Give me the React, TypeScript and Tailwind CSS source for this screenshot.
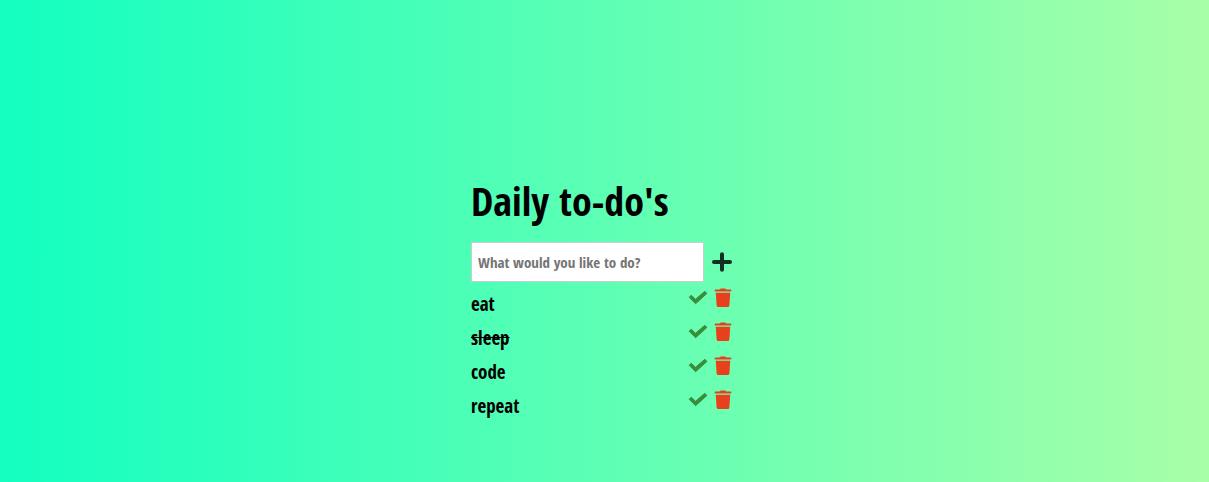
import { useState } from "react";
import type { FormEvent } from "react";

type Todo = { id: number; text: string; done: boolean };

const initialTodos: Todo[] = [
  { id: 1, text: "eat", done: false },
  { id: 2, text: "sleep", done: true },
  { id: 3, text: "code", done: false },
  { id: 4, text: "repeat", done: false },
];

function PlusIcon() {
  return (
    <svg className="size-5" viewBox="0 0 20 20" fill="none" stroke="currentColor" strokeWidth="4" strokeLinecap="round" aria-hidden="true">
      <path d="M10 2.2v15.6M2 10h16" />
    </svg>
  );
}

function CheckIcon() {
  return (
    <svg className="size-5" viewBox="0 0 20 20" fill="currentColor" stroke="currentColor" strokeWidth="1" strokeLinejoin="round" aria-hidden="true">
      <path d="M1.200 9.300L3.200 7.200 7.500 11.300 16.800 3.300 18.900 5.500 7.600 15.700z" />
    </svg>
  );
}

function TrashIcon() {
  return (
    <svg className="h-5 w-[18px]" viewBox="0 0 18 20" fill="currentColor" aria-hidden="true">
      <path d="M5.6 1.6C6 .9 6.5.6 7.2.6h3.6c.7 0 1.2.3 1.6 1h4.1c.5 0 .9.4.9.9s-.4.9-.9.9h-15c-.5 0-.9-.4-.9-.9s.4-.9.9-.9z" />
      <path d="M1.8 4.8h14.4l-.8 12.4c-.1 1.2-.9 1.9-2 1.9H4.600c-1.100 0-1.900-.7-2-1.900z" />
    </svg>
  );
}

export default function App() {
  const [todos, setTodos] = useState(initialTodos);
  const [draft, setDraft] = useState("");

  const add = (event: FormEvent) => {
    event.preventDefault();
    const text = draft.trim();
    if (!text) return;
    setTodos([...todos, { id: Date.now(), text, done: false }]);
    setDraft("");
  };

  const toggle = (id: number) =>
    setTodos(todos.map((t) => (t.id === id ? { ...t, done: !t.done } : t)));

  const remove = (id: number) => setTodos(todos.filter((t) => t.id !== id));

  return (
    <main className="flex min-h-screen justify-center bg-linear-to-r/srgb from-[#12ffc0] to-[#a8ffa8] pt-44 pb-12 font-['Open_Sans_Condensed','Open_Sans',sans-serif] font-bold text-black">
      <div className="pr-1.5">
        <h1 className="text-[40px] leading-[50px]">Daily to-do's</h1>
        <form onSubmit={add} className="mt-4 flex items-center gap-2">
          <input
            type="text"
            aria-label="New to-do"
            placeholder="What would you like to do?"
            value={draft}
            onChange={(e) => setDraft(e.target.value)}
            className="h-10 w-[233px] border border-[#ccc] bg-white px-1.5 text-[15px] outline-none placeholder:text-[#757575]"
          />
          <button type="submit" aria-label="Add" className="cursor-pointer text-[#14301f]">
            <PlusIcon />
          </button>
        </form>
        <ul>
          {todos.map((todo) => (
            <li key={todo.id} className="flex h-[34px] items-start">
              <span className={todo.done ? "pt-2 text-[19px] leading-7 line-through" : "pt-2 text-[19px] leading-7"}>
                {todo.text}
              </span>
              <div className="ml-auto flex items-center gap-1.5 pt-1.5">
                <button
                  type="button"
                  aria-label={`Complete ${todo.text}`}
                  onClick={() => toggle(todo.id)}
                  className="cursor-pointer text-[#388e3c]"
                >
                  <CheckIcon />
                </button>
                <button
                  type="button"
                  aria-label={`Delete ${todo.text}`}
                  onClick={() => remove(todo.id)}
                  className="cursor-pointer text-[#e8401c]"
                >
                  <TrashIcon />
                </button>
              </div>
            </li>
          ))}
        </ul>
      </div>
    </main>
  );
}
